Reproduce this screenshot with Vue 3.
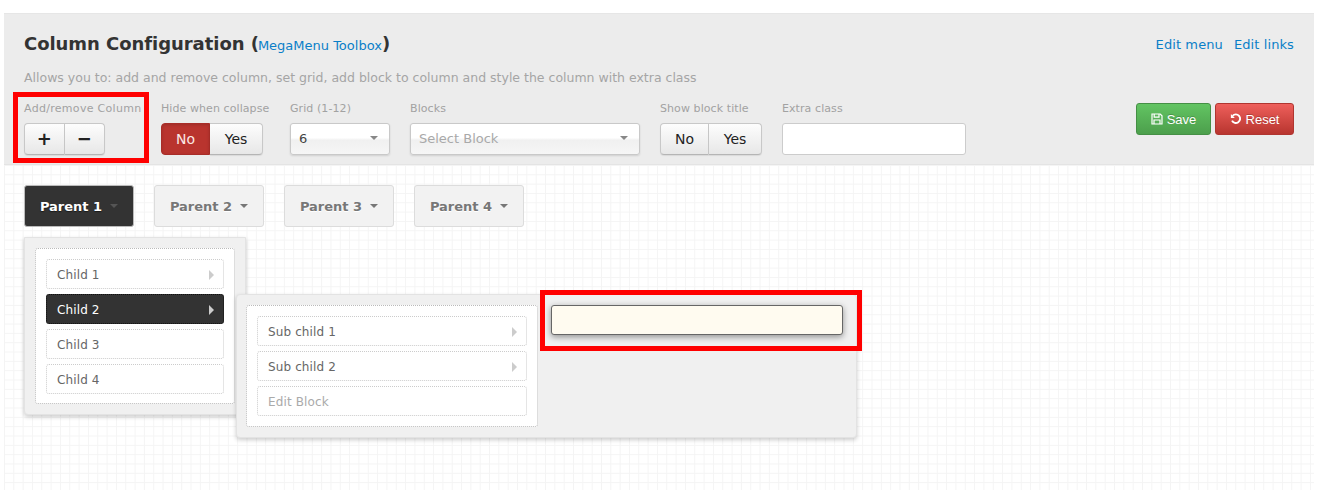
<template>
  <div class="page">
    <div class="toolbox">
      <div class="head">
        <h3 class="title">Column Configuration (<a class="link small">MegaMenu Toolbox</a>)</h3>
        <div class="head-links">
          <a class="link">Edit menu</a>
          <a class="link">Edit links</a>
        </div>
      </div>
      <p class="desc">Allows you to: add and remove column, set grid, add block to column and style the column with extra class</p>
      <div class="tools">
        <div class="group g-add">
          <label>Add/remove Column</label>
          <div class="btn-group">
            <button class="btn sign">+</button>
            <button class="btn sign">−</button>
          </div>
        </div>
        <div class="group g-hide">
          <label>Hide when collapse</label>
          <div class="btn-group">
            <button class="btn toggle no active">No</button>
            <button class="btn toggle yes">Yes</button>
          </div>
        </div>
        <div class="group g-grid">
          <label>Grid (1-12)</label>
          <div class="select"><span>6</span><i class="caret"></i></div>
        </div>
        <div class="group g-blocks">
          <label>Blocks</label>
          <div class="select placeholder"><span>Select Block</span><i class="caret"></i></div>
        </div>
        <div class="group g-title">
          <label>Show block title</label>
          <div class="btn-group">
            <button class="btn toggle no">No</button>
            <button class="btn toggle yes">Yes</button>
          </div>
        </div>
        <div class="group g-extra">
          <label>Extra class</label>
          <input class="extra" type="text" />
        </div>
        <div class="actions">
          <button class="action save">
            <svg width="12" height="12" viewBox="0 0 12 12" fill="none" stroke="#fff" stroke-width="1.2">
              <path d="M1 1h8.2L11 2.8V11H1z" />
              <path d="M3.2 1v3.2h4.8V1M3 11V7h6v4" />
            </svg>
            Save
          </button>
          <button class="action reset">
            <svg width="12" height="12" viewBox="0 0 12 12" fill="none" stroke="#fff" stroke-width="1.9">
              <path d="M2.6 2.8A4.3 4.3 0 1 1 2 7.6" />
              <path d="M.9 1v3.9h3.9z" fill="#fff" stroke="none" />
            </svg>
            Reset
          </button>
        </div>
      </div>
    </div>

    <div class="canvas">
      <ul class="nav">
        <li v-for="(p, i) in parents" :key="p" class="nav-item" :class="{ open: i === 0 }">
          {{ p }}<i class="caret"></i>
        </li>
      </ul>

      <div class="drop first">
        <div class="dotted">
          <div v-for="c in children" :key="c.name" class="item" :class="{ current: c.current }">
            {{ c.name }}<i v-if="c.arrow" class="arrow"></i>
          </div>
        </div>

        <div class="drop second">
          <div class="dotted sub-col">
            <div v-for="s in subs" :key="s.name" class="item" :class="{ muted: !s.arrow }">
              {{ s.name }}<i v-if="s.arrow" class="arrow"></i>
            </div>
          </div>
          <div class="selected-col"></div>
        </div>
      </div>

      <div class="mark mark-input"></div>
    </div>

    <div class="mark mark-add"></div>
  </div>
</template>

<script setup>
const parents = ['Parent 1', 'Parent 2', 'Parent 3', 'Parent 4']

const children = [
  { name: 'Child 1', arrow: true },
  { name: 'Child 2', arrow: true, current: true },
  { name: 'Child 3' },
  { name: 'Child 4' }
]

const subs = [
  { name: 'Sub child 1', arrow: true },
  { name: 'Sub child 2', arrow: true },
  { name: 'Edit Block' }
]
</script>

<style>
html, body { background: #fff; overflow: hidden; }
</style>

<style scoped>
.page { position: relative; width: 1324px; height: 490px; padding: 13px 10px 0 4px; box-sizing: border-box; font-family: "DejaVu Sans", sans-serif; overflow: hidden; }

.toolbox { height: 152px; box-sizing: border-box; padding: 20px 20px 0; background: #ececec; border-top: 1px solid #e6e6e6; border-bottom: 1px solid #e4e4e4; }
.head { display: flex; justify-content: space-between; align-items: flex-start; height: 20px; }
.title { margin: 0; font-size: 18px; line-height: 20px; font-weight: bold; color: #333; letter-spacing: -0.05px; }
.title .link { margin-left: -1px; letter-spacing: 0; }
.link { color: #0a7fc8; font-size: 13px; font-weight: normal; line-height: 20px; }
.head-links { display: flex; gap: 11px; margin-top: 1px; letter-spacing: 0.1px; }
.desc { margin: 15px 0 0; font-size: 12.5px; line-height: 18px; color: #a5a5a5; }

.tools { display: flex; gap: 20px; margin-top: 13px; align-items: flex-start; }
.group { display: flex; flex-direction: column; }
.group label { height: 18px; margin-bottom: 5px; font-size: 11px; line-height: 18px; color: #a2a2a2; white-space: nowrap; letter-spacing: 0.08px; }
.g-add label { letter-spacing: 0.3px; }
.g-add { width: 117px; }
.g-hide { width: 109px; }
.g-grid { width: 100px; }
.g-blocks { width: 230px; }
.g-title { width: 102px; }
.g-extra { width: 184px; }

.btn-group { display: flex; }
.btn { height: 32px; padding: 0; box-sizing: border-box; border: 1px solid #c8c8c8; border-bottom-color: #b5b5b5; background: linear-gradient(#fdfdfd, #e7e7e7); color: #222; font-family: inherit; font-size: 14px; box-shadow: 0 1px 1px rgba(0, 0, 0, 0.08); }
.btn:first-child { border-radius: 4px 0 0 4px; }
.btn:last-child { border-radius: 0 4px 4px 0; border-left: 0; }
.sign { width: 40.5px; font-size: 18px; font-weight: bold; line-height: 26px; color: #222; }
.toggle.no { width: 49px; }
.toggle.yes { width: 53px; }
.toggle.active { background: #b9342e; border-color: #a82d28; color: #fbe8e6; box-shadow: inset 0 1px 3px rgba(0, 0, 0, 0.15); }

.select { position: relative; height: 30px; padding: 0 8px 2px; box-sizing: content-box; height: 28px; display: flex; align-items: center; border: 1px solid #c9c9c9; border-radius: 3px; background: linear-gradient(#fff 0%, #fff 46%, #f0f0f0 54%, #f6f6f6 100%); font-size: 13px; color: #444; box-shadow: 0 1px 2px rgba(0, 0, 0, 0.12); }
.select .caret { position: absolute; right: 11px; top: 12px; margin: 0; border-top-color: #888; }
.select.placeholder { color: #a9a9a9; }
.caret { display: inline-block; width: 0; height: 0; margin-left: 8px; vertical-align: 2px; border-left: 4px solid transparent; border-right: 4px solid transparent; border-top: 4px solid #777; }

.extra { width: 184px; height: 32px; box-sizing: border-box; padding: 0 8px; border: 1px solid #ccc; border-radius: 3px; background: #fff; outline: none; }

.actions { display: flex; gap: 4px; margin-left: auto; margin-top: 3px; }
.action { height: 32px; display: flex; align-items: center; justify-content: center; gap: 4px; padding: 0; border-radius: 3px; color: #fff; font-family: "Liberation Sans", sans-serif; font-size: 13px; text-shadow: 0 -1px 0 rgba(0, 0, 0, 0.2); }
.save { width: 75px; border: 1px solid #458f45; background: linear-gradient(#62c462, #4c9f4c); }
.reset { width: 79px; border: 1px solid #b03530; background: linear-gradient(#ee5f5b, #b8352f); }

.canvas {
  position: relative;
  height: 325px;
  padding: 20px 20px 0;
  box-sizing: border-box;
  background-color: #fff;
  background-image:
    linear-gradient(#f4f4f4 1px, transparent 1px),
    linear-gradient(90deg, #f4f4f4 1px, transparent 1px);
  background-size: 9.33px 9.33px;
}

.nav { display: flex; gap: 20px; margin: 0; padding: 0; list-style: none; }
.nav-item { width: 110px; height: 42px; box-sizing: border-box; display: flex; align-items: center; justify-content: center; border: 1px solid #dcdcdc; border-radius: 3px; background: #f2f2f2; color: #777; font-size: 13px; font-weight: bold; text-shadow: 0 1px 0 #fff; }
.nav-item.open { background: #333; border-color: #bbb; color: #fff; text-shadow: 0 1px 1px rgba(0, 0, 0, 0.5); }
.nav-item.open .caret { border-top-color: #555; }

.drop { background: #f0f0f0; border: 1px solid #e3e3e3; border-radius: 0 0 4px 4px; box-shadow: 0 2px 4px rgba(0, 0, 0, 0.2); box-sizing: border-box; }
.first { position: relative; width: 222px; height: 178px; margin-top: 10px; padding: 10px; }
.second { position: absolute; left: 211px; top: 56px; width: 621px; height: 144px; padding: 10px 10px 10px 9px; display: flex; gap: 13px; border-radius: 4px; }

.dotted { padding: 10px; background: #fff; border: 1px dotted #bbb; border-radius: 3px; box-sizing: border-box; }
.first > .dotted { height: 156px; }
.sub-col { width: 292px; height: 122px; }

.item { position: relative; height: 30px; box-sizing: border-box; padding: 1px 10px 0; display: flex; align-items: center; border: 1px dotted #ccc; border-radius: 3px; background: #fff; color: #666; font-size: 12px; letter-spacing: 0.12px; }
.item + .item { margin-top: 5px; }
.item.current { background: #333; border-color: #111; color: #fff; }
.item.muted { color: #aaa; }
.arrow { position: absolute; right: 9px; top: 10px; width: 0; height: 0; border-top: 5px solid transparent; border-bottom: 5px solid transparent; border-left: 5px solid #ccc; }

.selected-col { width: 292px; height: 30px; box-sizing: border-box; background: #fffbf0; border: 1px solid #666; border-radius: 3px; box-shadow: 0 2px 6px rgba(0, 0, 0, 0.4); }

.mark { position: absolute; box-sizing: border-box; border: 5px solid #f00; pointer-events: none; }
.mark-add { left: 13px; top: 92px; width: 136px; height: 71px; }
.mark-input { left: 536px; top: 125px; width: 322px; height: 61px; }
</style>
